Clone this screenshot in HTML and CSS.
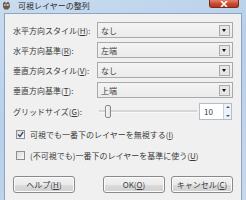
FILE: index.html
```html
<!DOCTYPE html>
<html lang="ja">
<head>
    <meta charset="UTF-8">
    <title>可視レイヤーの整列</title>
    <link rel="stylesheet" href="styles.css">
</head>
<body>
    <!-- タイトルバー -->
    <div class="title-bar">
        <div class="title">
            <svg class="app-icon" width="9" height="9" viewBox="0 0 9 9">
                <path d="M1 2 L3 0.5 L4 2.5 L6 0.5 L7.5 2.5 L8 6 L6 8.5 L2.5 8.5 L1 6 Z" fill="#6b5a45"/>
                <circle cx="3.3" cy="4" r="1.1" fill="#fff"/>
                <circle cx="5.8" cy="4" r="1.1" fill="#fff"/>
                <circle cx="3.5" cy="4.1" r="0.5" fill="#000"/>
                <circle cx="6" cy="4.1" r="0.5" fill="#000"/>
            </svg>
            <span>可視レイヤーの整列</span>
        </div>
        <div class="close-btn">
            <svg width="8" height="6" viewBox="0 0 8 6">
                <path d="M1 0 L7 6 M7 0 L1 6" stroke="#fff" stroke-width="1.6"/>
            </svg>
        </div>
    </div>

    <!-- ダイアログ本体 -->
    <div class="client">
        <div class="form-row">
            <label>水平方向スタイル(<u>H</u>):</label>
            <div class="combo"><span>なし</span><div class="drop"></div></div>
        </div>
        <div class="form-row">
            <label>水平方向基準(<u>R</u>):</label>
            <div class="combo"><span>左端</span><div class="drop"></div></div>
        </div>
        <div class="form-row">
            <label>垂直方向スタイル(<u>V</u>):</label>
            <div class="combo"><span>なし</span><div class="drop"></div></div>
        </div>
        <div class="form-row">
            <label>垂直方向基準(<u>T</u>):</label>
            <div class="combo"><span>上端</span><div class="drop"></div></div>
        </div>

        <div class="grid-row">
            <label>グリッドサイズ(<u>G</u>):</label>
            <div class="slider"><div class="thumb"></div></div>
            <div class="spin">
                <span>10</span>
                <div class="spin-arrows">
                    <div class="up"></div>
                    <div class="down"></div>
                </div>
            </div>
        </div>

        <div class="check-row">
            <div class="checkbox checked">
                <svg width="7" height="7" viewBox="0 0 7 7"><path d="M1 3.5 L3 5.5 L6.2 1" stroke="#2d4d7c" stroke-width="1.3" fill="none"/></svg>
            </div>
            <span>可視でも一番下のレイヤーを無視する(<u>I</u>)</span>
        </div>
        <div class="check-row">
            <div class="checkbox"></div>
            <span>(不可視でも)一番下のレイヤーを基準に使う(<u>U</u>)</span>
        </div>

        <div class="button-row">
            <button class="btn help">ヘルプ(<u>H</u>)</button>
            <div class="right-buttons">
                <button class="btn">OK(<u>O</u>)</button>
                <button class="btn">キャンセル(<u>C</u>)</button>
            </div>
        </div>
    </div>
</body>
</html>
```

FILE: styles.css
```css
* {
    box-sizing: border-box;
}

body {
    margin: 0;
    width: 246px;
    height: 200px;
    overflow: hidden;
    background: linear-gradient(160deg, #c9dcf0 0%, #b7cfea 45%, #c6d9ee 100%);
    font-family: "Noto Sans CJK JP", "Noto Sans", sans-serif;
    font-size: 8px;
    color: #3a3a3a;
}

u {
    text-decoration: underline;
}

.title-bar {
    height: 13px;
    display: flex;
    justify-content: space-between;
    align-items: flex-start;
    padding: 0 7px 0 1px;
}

.title {
    display: flex;
    align-items: center;
    gap: 7px;
    height: 10px;
    font-size: 8px;
    color: #2a2a2a;
    padding-left: 1px;
}

.app-icon {
    flex: none;
}

.close-btn {
    width: 30px;
    height: 8px;
    background: linear-gradient(#e0826a, #c8442c 60%, #b93820);
    border: 1px solid #7a2a1c;
    border-top: none;
    border-radius: 0 0 3px 3px;
    display: flex;
    justify-content: center;
    align-items: center;
}

.client {
    margin: 0 4px;
    height: 190px;
    background: #f0f0f0;
    border: 1px solid #8ea4c0;
    padding: 8px 8px 0 8px;
}

.form-row {
    display: flex;
    align-items: center;
    height: 16px;
    margin-bottom: 4px;
}

.form-row label,
.grid-row label {
    width: 84px;
    flex: none;
    white-space: nowrap;
}

.combo {
    width: 136px;
    height: 16px;
    border: 1px solid #a9a9a9;
    background: linear-gradient(#f4f4f4, #ebebeb);
    display: flex;
    align-items: center;
    justify-content: space-between;
    padding-left: 3px;
    padding-right: 2px;
}

.drop {
    width: 11px;
    height: 11px;
    border: 1px solid #ababab;
    background: #e6e6e6;
    position: relative;
}

.drop::after {
    content: "";
    position: absolute;
    left: 2px;
    top: 3px;
    border-left: 2.5px solid transparent;
    border-right: 2.5px solid transparent;
    border-top: 3px solid #111;
}

.grid-row {
    display: flex;
    align-items: center;
    height: 17px;
    margin-top: 5px;
    margin-bottom: 3px;
}

.slider {
    width: 98px;
    height: 15px;
    margin-left: 2px;
    position: relative;
    display: flex;
    align-items: center;
}

.slider::before {
    content: "";
    display: block;
    width: 100%;
    height: 2px;
    background: #d6d6d6;
    border-bottom: 1px solid #f8f8f8;
}

.thumb {
    position: absolute;
    left: 6px;
    top: 1px;
    width: 6px;
    height: 13px;
    border: 1px solid #8a8a8a;
    border-radius: 2px;
    background: linear-gradient(90deg, #fafafa, #e2e2e2);
}

.spin {
    width: 33px;
    height: 17px;
    margin-left: 2px;
    border: 1px solid #b3bccb;
    background: #fff;
    display: flex;
    align-items: center;
    justify-content: space-between;
    padding-left: 4px;
}

.spin-arrows {
    width: 8px;
    height: 15px;
    display: flex;
    flex-direction: column;
}

.spin-arrows div {
    flex: 1;
    background: #eef2f7;
    border-left: 1px solid #c8d0dc;
    position: relative;
}

.spin-arrows .up::after,
.spin-arrows .down::after {
    content: "";
    position: absolute;
    left: 1.5px;
    border-left: 2px solid transparent;
    border-right: 2px solid transparent;
}

.spin-arrows .up::after {
    top: 2px;
    border-bottom: 2px solid #3a5a8a;
}

.spin-arrows .down::after {
    top: 3px;
    border-top: 2px solid #3a5a8a;
}

.check-row {
    display: flex;
    align-items: center;
    gap: 5px;
    height: 13px;
    margin-top: 8px;
    padding-left: 3px;
    white-space: nowrap;
}

.checkbox {
    width: 9px;
    height: 9px;
    border: 1px solid #8f8f8f;
    background: linear-gradient(135deg, #dcdcdc, #fafafa);
    display: flex;
    align-items: center;
    justify-content: center;
    flex: none;
}

.button-row {
    display: flex;
    justify-content: space-between;
    margin-top: 14px;
}

.right-buttons {
    display: flex;
    gap: 6px;
}

.btn {
    width: 62px;
    height: 17px;
    padding: 0;
    font-family: inherit;
    font-size: 8px;
    color: #3a3a3a;
    border: 1px solid #8a8a8a;
    border-radius: 3px;
    background: linear-gradient(#f2f2f2 0%, #ebebeb 50%, #dcdcdc 51%, #d0d0d0 100%);
    box-shadow: inset 0 0 0 1px #fcfcfc;
}
```
